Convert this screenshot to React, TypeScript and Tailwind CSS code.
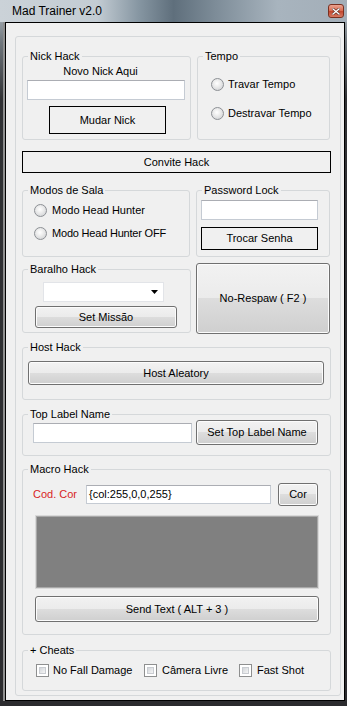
import React from "react";

const flatBtn = "border border-black bg-[#f0f0f0] flex items-center justify-center";
const winBtn =
  "border border-[#707070] rounded-[3px] bg-[linear-gradient(#f2f2f2_0%,#ebebeb_50%,#dddddd_50%,#cfcfcf_100%)] shadow-[inset_0_0_0_1px_#fcfcfc] flex items-center justify-center";
const input = "bg-white border border-[#c5cbd3] border-t-[#abadb3]";

function Group({ label, className, children }: { label: string; className: string; children?: React.ReactNode }) {
  return (
    <fieldset className={"border border-[#d5d8da] rounded-[3px] min-w-0 shrink-0 " + className}>
      <legend className="ml-[5px] px-[2px] h-[13px] leading-[13px]">{label}</legend>
      {children}
    </fieldset>
  );
}

function Radio() {
  return (
    <span className="block w-[13px] h-[13px] rounded-full border border-[#8d9095] bg-[radial-gradient(circle_at_45%_40%,#ffffff_0%,#eeeeee_35%,#c9cbce_100%)] shrink-0" />
  );
}

function Check() {
  return (
    <span className="block w-[13px] h-[13px] border border-[#8e8f8f] bg-white p-[2px] shrink-0">
      <span className="block w-full h-full border border-[#c9ccd1] bg-[linear-gradient(135deg,#d3d6da,#f5f5f5)]" />
    </span>
  );
}

export default function App() {
  return (
    <div className="w-[347px] h-[706px] flex flex-col font-['Liberation_Sans',Arial,sans-serif] text-[11px] leading-[13px] text-black bg-[linear-gradient(#bfc8cf_0%,#6f767c_6%,#303134_14%,#2b2b2e_100%)]">
      {/* title bar */}
      <div className="h-[22px] shrink-0 flex items-center bg-[linear-gradient(to_right,#cbd2d8_0%,#c3ccd3_28%,#8696a2_40%,#5f6f7c_50%,#7d8c98_62%,#a8b4be_80%,#a3aeb8_100%)]">
        <span className="pl-[12px] text-[12px] leading-[22px] text-black">Mad Trainer v2.0</span>
        <div className="ml-auto mr-[3px] w-[16px] h-[14px] rounded-[3px] border border-[#7a3020] bg-[linear-gradient(#eaa491_0%,#d8694f_50%,#c0432a_50%,#d77a63_100%)] flex items-center justify-center">
          <svg width="8" height="7" viewBox="0 0 8 7">
            <path d="M1 1 L7 6 M7 1 L1 6" stroke="#5a2a20" strokeWidth="2.6" strokeLinecap="square" />
            <path d="M1 1 L7 6 M7 1 L1 6" stroke="#ffffff" strokeWidth="1.4" strokeLinecap="square" />
          </svg>
        </div>
      </div>

      {/* client */}
      <div className="flex-1 ml-[5px] mr-[2px] mb-[5px] border border-black bg-[#f0f0f0] flex flex-col shadow-[-2px_0_0_#8f8f8f]">
        <div className="flex-1 mt-[13px] ml-[9px] mr-[3px] mb-[4px] border border-[#d5d8da] rounded-[3px] flex flex-col">
          {/* row 1 */}
          <div className="flex mt-[13px] ml-[6px] gap-[6px]">
            <Group label="Nick Hack" className="w-[169px] h-[90px]">
              <div className="mt-[2px] pr-[12px] text-center">Novo Nick Aqui</div>
              <div className={"mt-[2px] ml-[4px] w-[158px] h-[20px] " + input} />
              <div className={"mt-[6px] ml-[26px] w-[117px] h-[28px] " + flatBtn}>Mudar Nick</div>
            </Group>
            <Group label="Tempo" className="w-[133px] h-[90px]">
              <div className="mt-[15px] ml-[13px] flex items-center h-[13px] gap-[4px]">
                <Radio />
                <span>Travar Tempo</span>
              </div>
              <div className="mt-[16px] ml-[13px] flex items-center h-[13px] gap-[4px]">
                <Radio />
                <span>Destravar Tempo</span>
              </div>
            </Group>
          </div>

          {/* row 2 */}
          <div className={"mt-[11px] ml-[6px] w-[309px] h-[22px] shrink-0 " + flatBtn}>Convite Hack</div>

          {/* row 3 */}
          <div className="flex mt-[11px] ml-[6px] gap-[6px]">
            <Group label="Modos de Sala" className="w-[168px] h-[73px]">
              <div className="mt-[7px] ml-[11px] flex items-center h-[13px] gap-[5px]">
                <Radio />
                <span>Modo Head Hunter</span>
              </div>
              <div className="mt-[10px] ml-[11px] flex items-center h-[13px] gap-[5px]">
                <Radio />
                <span className="whitespace-nowrap tracking-[-0.2px]">Modo Head Hunter OFF</span>
              </div>
            </Group>
            <Group label="Password Lock" className="w-[134px] h-[73px]">
              <div className={"mt-[3px] ml-[4px] w-[117px] h-[20px] " + input} />
              <div className={"mt-[7px] ml-[4px] w-[117px] h-[23px] " + flatBtn}>Trocar Senha</div>
            </Group>
          </div>

          {/* row 4 */}
          <div className="flex items-start mt-[6px] ml-[6px] gap-[5px]">
            <Group label="Baralho Hack" className="w-[169px] h-[70px]">
              <div className="mt-[6px] ml-[20px] w-[121px] h-[20px] bg-white border border-[#e2e4e8] flex items-center justify-end pr-[5px]">
                <svg width="7" height="4" viewBox="0 0 7 4">
                  <path d="M0 0 H7 L3.5 4 Z" fill="#000" />
                </svg>
              </div>
              <div className={"mt-[4px] ml-[12px] w-[142px] h-[22px] " + winBtn}>Set Missão</div>
            </Group>
            <div className={"w-[134px] h-[71px] shrink-0 " + winBtn}>No-Respaw ( F2 )</div>
          </div>

          {/* row 5 */}
          <div className="flex mt-[7px] ml-[6px]">
            <Group label="Host Hack" className="w-[309px] h-[59px]">
              <div className={"mt-[7px] ml-[5px] w-[296px] h-[24px] " + winBtn}>Host Aleatory</div>
            </Group>
          </div>

          {/* row 6 */}
          <div className="flex mt-[8px] ml-[6px]">
            <Group label="Top Label Name" className="w-[309px] h-[48px]">
              <div className="mt-[-1px] h-[25px] flex items-center">
                <div className={"ml-[10px] w-[159px] h-[20px] " + input} />
                <div className={"ml-[4px] w-[122px] h-[25px] " + winBtn}>Set Top Label Name</div>
              </div>
            </Group>
          </div>

          {/* row 7 */}
          <div className="flex mt-[7px] ml-[6px]">
            <Group label="Macro Hack" className="w-[309px] h-[172px]">
              <div className="mt-[7px] h-[23px] flex items-center">
                <span className="ml-[10px] w-[53px] text-[#d81e1e]">Cod. Cor</span>
                <div className={"w-[185px] h-[19px] pl-[2px] flex items-center " + input}>{"{col:255,0,0,255}"}</div>
                <div className={"ml-[7px] w-[40px] h-[23px] " + winBtn}>Cor</div>
              </div>
              <div className="mt-[9px] ml-[12px] w-[284px] h-[74px] bg-[#808080] border border-[#d9d9d9] shadow-[inset_0_0_0_1px_#a8a8a8]" />
              <div className={"mt-[7px] ml-[12px] w-[284px] h-[26px] " + winBtn}>Send Text ( ALT + 3 )</div>
            </Group>
          </div>

          {/* row 8 */}
          <div className="flex mt-[9px] ml-[6px]">
            <Group label="+ Cheats" className="w-[309px] h-[47px]">
              <div className="mt-[7px] ml-[13px] h-[13px] flex items-center">
                <div className="w-[108px] flex items-center gap-[4px]">
                  <Check />
                  <span>No Fall Damage</span>
                </div>
                <div className="w-[95px] flex items-center gap-[5px]">
                  <Check />
                  <span>Câmera Livre</span>
                </div>
                <div className="flex items-center gap-[5px]">
                  <Check />
                  <span>Fast Shot</span>
                </div>
              </div>
            </Group>
          </div>
        </div>
      </div>
    </div>
  );
}
